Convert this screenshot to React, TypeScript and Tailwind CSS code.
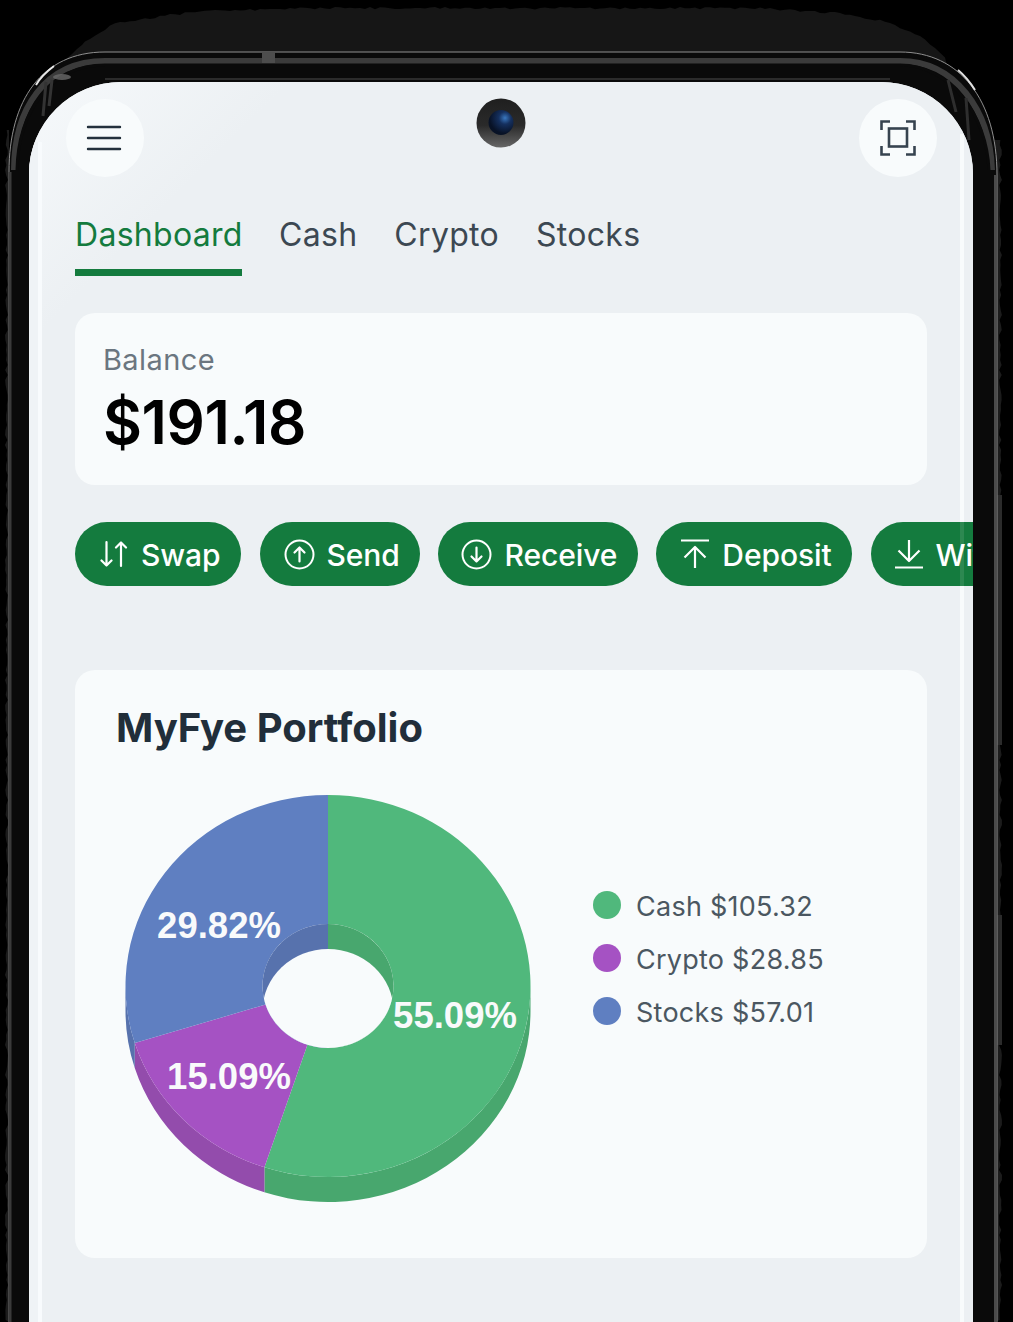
import React from 'react';

const GREEN = '#147b3e';

// rough edge of the phone's shadow, seeded so it stays the same between runs
const rough = (i: number, amp: number) => (Math.abs(Math.sin(i * 12.9898) * 43758.5453) % 1) * amp;

const TOP_EDGE: [number, number][] = [
  [62, 61], [85, 40], [115, 22], [170, 14], [200, 10], [300, 7], [760, 7], [840, 12], [885, 20], [920, 35], [948, 58],
];

const topEdge = () => {
  const pts: string[] = [];
  for (let i = 0; i < TOP_EDGE.length - 1; i++) {
    const [x0, y0] = TOP_EDGE[i];
    const [x1, y1] = TOP_EDGE[i + 1];
    for (let x = x0; x < x1; x += 5) {
      const y = y0 + ((y1 - y0) * (x - x0)) / (x1 - x0);
      pts.push(`${x} ${(y + rough(x, 2.4)).toFixed(1)}`);
    }
  }
  return `M${pts.join('L')}L948 70L62 70Z`;
};

const sideEdge = (x: number, from: number, to: number) => {
  const pts: string[] = [];
  for (let y = from; y <= to; y += 5) pts.push(`${(x + rough(y, 3)).toFixed(1)} ${y}`);
  return pts;
};

const PhoneFrame = () => (
  <svg className="absolute inset-0" width="1013" height="1322" viewBox="0 0 1013 1322">
    <path d={topEdge()} fill="#161616" />
    {/* ragged strips down both sides */}
    <path d={`M9 130L${sideEdge(5, 130, 1322).join('L')}L9 1322Z`} fill="#1c1c1c" />
    <path d={`M995 140L${sideEdge(999, 140, 1322).join('L')}L995 1322Z`} fill="#1c1c1c" />
    <rect x="995" y="495" width="7" height="250" fill="#2b2b2b" />
    <rect x="995" y="915" width="7" height="130" fill="#2b2b2b" />
    {/* body */}
    <path d="M9 1322V172C9 100 42 52 105 52H900C960 52 997 100 997 175V1322Z" fill="#0a0a0a" />
    <path d="M9 1322V172C9 100 42 52 105 52H900C960 52 997 100 997 175V1322" fill="none" stroke="#8f8f8f" strokeWidth="1" />
    <path d="M10 1322V172" stroke="#3a3a3a" strokeWidth="3" fill="none" />
    <path d="M995 1322V175" stroke="#4a4a4a" strokeWidth="2" fill="none" />
    <path d="M14 170C14 110 44 61 105 61H900C955 61 990 110 992 170" fill="none" stroke="#3b3b3b" strokeWidth="6" />
    <path d="M17 170C18 115 48 65 105 65H900C950 65 987 115 989 170" fill="none" stroke="#0a0a0a" strokeWidth="3" />
    <path d="M105 79H890" stroke="#2b2b2b" strokeWidth="2" />
    <rect x="262" y="53" width="13" height="10" fill="#4d4d4d" />
    {/* corner glints */}
    <path d="M36 85C40 78 46 72 54 66" fill="none" stroke="#e8e8e8" strokeWidth="2" />
    <path d="M958 70C964 75 970 82 975 90" fill="none" stroke="#e0e0e0" strokeWidth="2" />
    <ellipse cx="62" cy="77" rx="9" ry="3" fill="#6a6a6a" opacity="0.8" />
    <path d="M46 82L43 116M52 80L49 106" stroke="#333333" strokeWidth="3" fill="none" />
    <path d="M948 80L956 112M966 98L969 140" stroke="#2e2e2e" strokeWidth="3" fill="none" />
  </svg>
);

const Camera = () => (
  <svg className="absolute left-[447px] top-[16px]" width="50" height="50" viewBox="0 0 50 50">
    <defs>
      <radialGradient id="lens" cx="66%" cy="32%" r="62%">
        <stop offset="0" stopColor="#3a78c0" />
        <stop offset="0.4" stopColor="#15305f" />
        <stop offset="1" stopColor="#081226" />
      </radialGradient>
      <linearGradient id="camRing" x1="0" x2="0" y1="0" y2="1">
        <stop offset="0" stopColor="#1f1f1f" />
        <stop offset="0.55" stopColor="#2a2a2a" />
        <stop offset="1" stopColor="#666666" />
      </linearGradient>
    </defs>
    <circle cx="25" cy="25" r="24.5" fill="url(#camRing)" />
    <circle cx="25" cy="24.5" r="12.5" fill="url(#lens)" />
  </svg>
);

const MenuIcon = () => (
  <svg width="36" height="28" viewBox="0 0 36 28" fill="none" stroke="#24313d" strokeWidth="2.4" strokeLinecap="round" className="-ml-[2px]">
    <path d="M2 3H34M2 14H34M2 25H34" />
  </svg>
);

const ScanIcon = () => (
  <svg width="36" height="36" viewBox="0 0 36 36" fill="none" stroke="#36434f" strokeWidth="2.6">
    <path d="M1.5 10V1.5H10M26 1.5H34.5V10M1.5 26V34.5H10M26 34.5H34.5V26" />
    <rect x="9" y="8.5" width="18" height="18" />
  </svg>
);

const SwapIcon = () => (
  <svg width="28" height="28" viewBox="0 0 28 28" fill="none" stroke="white" strokeWidth="2.2" strokeLinecap="round" strokeLinejoin="round">
    <path d="M6.5 2V25.5M1.5 20.5L6.5 25.5L11.5 20.5M21 26V2.5M16 7.5L21 2.5L26 7.5" />
  </svg>
);

const SendIcon = () => (
  <svg width="31" height="31" viewBox="0 0 31 31" fill="none" stroke="white" strokeWidth="2" strokeLinecap="round" strokeLinejoin="round">
    <circle cx="15.5" cy="15.5" r="14" />
    <path d="M15.5 22.5V8.5M10.5 13.5L15.5 8.5L20.5 13.5" strokeWidth="2.2" />
  </svg>
);

const ReceiveIcon = () => (
  <svg width="31" height="31" viewBox="0 0 31 31" fill="none" stroke="white" strokeWidth="2" strokeLinecap="round" strokeLinejoin="round">
    <circle cx="15.5" cy="15.5" r="14" />
    <path d="M15.5 8.5V22.5M10.5 17.5L15.5 22.5L20.5 17.5" strokeWidth="2.2" />
  </svg>
);

const DepositIcon = () => (
  <svg width="28" height="30" viewBox="0 0 28 30" fill="none" stroke="white" strokeWidth="2.2" strokeLinejoin="round">
    <path d="M0 1.5H28M14 29V8M3.5 18.5L14 8L24.5 18.5" />
  </svg>
);

const WithdrawIcon = () => (
  <svg width="28" height="30" viewBox="0 0 28 30" fill="none" stroke="white" strokeWidth="2.2" strokeLinejoin="round">
    <path d="M14 1V22M3.5 11.5L14 22L24.5 11.5M0 28.5H28" />
  </svg>
);

const actions = [
  { label: 'Swap', icon: <SwapIcon />, cls: 'gap-[13px] pl-[25px] pr-[21px]' },
  { label: 'Send', icon: <SendIcon />, cls: 'ml-[1px] gap-[11px] pl-[24px] pr-[20px]' },
  { label: 'Receive', icon: <ReceiveIcon />, cls: 'gap-[13px] pl-[23px] pr-[21px]' },
  { label: 'Deposit', icon: <DepositIcon />, cls: 'gap-[13px] pl-[25px] pr-[20px]' },
  { label: 'Withdraw', icon: <WithdrawIcon />, cls: 'ml-[1px] gap-[13px] pl-[24px] pr-[20px]' },
];

// pie geometry
const CX = 328;
const CY = 986;
const RX = 202.5;
const RY = 191;
const HX = 65.5;
const HY = 62;
const DEPTH = 25;
const pt = (deg: number, rx: number, ry: number, dy = 0) => {
  const a = (deg * Math.PI) / 180;
  return `${(CX + rx * Math.sin(a)).toFixed(2)} ${(CY - ry * Math.cos(a) + dy).toFixed(2)}`;
};
const ringSlice = (a0: number, a1: number) => {
  const large = a1 - a0 > 180 ? 1 : 0;
  return `M${pt(a0, RX, RY)}A${RX} ${RY} 0 ${large} 1 ${pt(a1, RX, RY)}L${pt(a1, HX, HY)}A${HX} ${HY} 0 ${large} 0 ${pt(a0, HX, HY)}Z`;
};
const sideSlice = (a0: number, a1: number) =>
  `M${pt(a0, RX, RY)}A${RX} ${RY} 0 0 1 ${pt(a1, RX, RY)}L${pt(a1, RX, RY, DEPTH)}A${RX} ${RY} 0 0 0 ${pt(a0, RX, RY, DEPTH)}Z`;

const PortfolioPie = () => (
  <svg width="410" height="412" viewBox="125 793 410 412" className="block">
    <defs>
      <clipPath id="holeClip">
        <ellipse cx={CX} cy={CY} rx={HX} ry={HY} />
      </clipPath>
    </defs>
    {/* rim */}
    <path d={sideSlice(90, 198.3)} fill="#48a76e" />
    <path d={sideSlice(198.3, 252.6)} fill="#934cac" />
    <path d={sideSlice(252.6, 270)} fill="#5772ad" />
    {/* top face */}
    <path d={ringSlice(0, 198.3)} fill="#50b87c" />
    <path d={ringSlice(198.3, 252.6)} fill="#a552c3" />
    <path d={ringSlice(252.6, 360)} fill="#5f7fc1" />
    {/* inside wall of the hole, the far side only */}
    <g clipPath="url(#holeClip)">
      <rect x={CX - 70} y={CY - 70} width="70" height="140" fill="#5772ad" />
      <rect x={CX} y={CY - 70} width="70" height="140" fill="#48a76e" />
      <ellipse cx={CX} cy={CY + DEPTH} rx={HX} ry={HY} fill="#f8fbfc" />
    </g>
    <g fill="#f9fafb" fontFamily="'Liberation Sans', Arial, sans-serif" fontWeight="700" fontSize="36.5" textAnchor="middle">
      <text x="455" y="1028">55.09%</text>
      <text x="229" y="1089">15.09%</text>
      <text x="219" y="938">29.82%</text>
    </g>
  </svg>
);

const legend = [
  { label: 'Cash $105.32', dot: 'bg-[#50b87c]' },
  { label: 'Crypto $28.85', dot: 'bg-[#a552c3]' },
  { label: 'Stocks $57.01', dot: 'bg-[#5f7fc1]' },
];

export default function App() {
  return (
    <div className="relative w-[1013px] h-[1322px] overflow-hidden bg-black font-['Inter',sans-serif]">
      <PhoneFrame />

      <div className="absolute left-[29px] top-[82px] w-[944px] h-[1240px] overflow-hidden rounded-t-[92px] bg-[#ecf0f3]">
        {/* glass reflections */}
        <div className="absolute inset-0 bg-[linear-gradient(135deg,#f6f9fb_0%,#ecf0f3_12%)]" />
        <div className="absolute left-0 top-[60px] bottom-0 w-[13px] bg-[linear-gradient(90deg,#eff3f6_0%,#eff3f6_68%,#f8fbfd_70%,#f8fbfd_100%)]" />
        <div className="absolute right-[9px] top-[52px] bottom-0 w-[4px] bg-[#f7fafc]" />

        <div className="relative">
          <div className="flex items-center justify-between pl-[37px] pr-[36px] pt-[17px]">
            <div className="flex size-[78px] items-center justify-center rounded-full bg-[#f8fbfc]">
              <MenuIcon />
            </div>
            <div className="flex size-[78px] items-center justify-center rounded-full bg-[#f8fbfc]">
              <ScanIcon />
            </div>
          </div>
          <Camera />

          <nav className="mt-[32px] ml-[46px] flex gap-[37px] text-[32px] leading-[46px] tracking-[0.3px]">
            <span className="h-[67px] w-[167px] border-b-[7px] border-[#147b3e] pt-[3px] text-[#147b3e]">Dashboard</span>
            <span className="pt-[3px] text-[#3c4852]">Cash</span>
            <span className="pt-[3px] text-[#3c4852]">Crypto</span>
            <span className="pt-[3px] text-[#3c4852]">Stocks</span>
          </nav>

          <section className="mx-[46px] mt-[37px] h-[172px] w-[852px] rounded-[20px] bg-[#f8fbfc] pl-[28px] pt-[29px]">
            <p className="text-[29px] leading-[36px] tracking-[0.4px] text-[#6b7680]">Balance</p>
            <p className="mt-[8px] text-[60px] font-semibold leading-[72px] tracking-[-0.4px] text-black">$191.18</p>
          </section>

          <div className="ml-[46px] mt-[37px] flex w-[1100px] gap-[18px]">
            {actions.map(a => (
              <div
                key={a.label}
                className={`flex h-[64px] items-center rounded-full ${a.cls}`}
                style={{ backgroundColor: GREEN }}
              >
                {a.icon}
                <span className="pt-[2px] text-[30px] font-medium leading-none tracking-[-0.1px] text-white">{a.label}</span>
              </div>
            ))}
          </div>

          <section className="mx-[46px] mt-[84px] h-[588px] w-[852px] rounded-[20px] bg-[#f8fbfc] pl-[41px] pt-[33px]">
            <h2 className="text-[40px] font-bold leading-[50px] text-[#212e3a]">MyFye Portfolio</h2>
            <div className="mt-[40px] flex">
              <div className="ml-[9px] shrink-0">
                <PortfolioPie />
              </div>
              <ul className="ml-[58px] mt-[96px] flex flex-col gap-[21px]">
                {legend.map(l => (
                  <li key={l.label} className="flex h-[32px] items-center gap-[15px] text-[27px] tracking-[0.25px] text-[#4b5761]">
                    <span className={`size-[28px] shrink-0 rounded-full ${l.dot}`} />
                    <span className="pt-[5px]">{l.label}</span>
                  </li>
                ))}
              </ul>
            </div>
          </section>
        </div>

        <div className="absolute right-[9px] top-[52px] bottom-0 w-[4px] bg-white/10" />
      </div>
    </div>
  );
}
